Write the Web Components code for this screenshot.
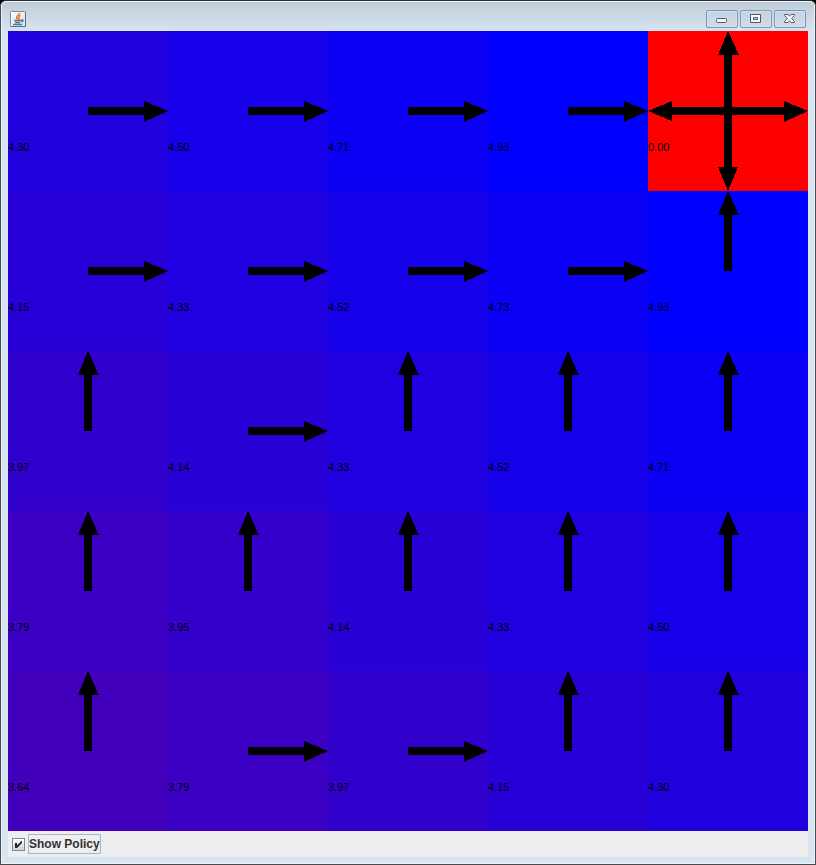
<!DOCTYPE html>
<html lang="en">
<head>
<meta charset="utf-8">
<title>Policy viewer</title>
<style>
html, body { margin: 0; min-height: 100%; background: #000; }
body { font-family: "Liberation Sans", Arial, sans-serif; }
</style>
</head>
<body>
<app-window>
  <java-icon slot="icon"></java-icon>
  <window-button slot="controls" kind="minimize"></window-button>
  <window-button slot="controls" kind="maximize"></window-button>
  <window-button slot="controls" kind="close"></window-button>
  <policy-grid></policy-grid>
  <policy-toggle>Show Policy</policy-toggle>
</app-window>
<script>
class BaseElement extends HTMLElement {
  render(html) {
    const t = document.createElement('template');
    t.innerHTML = html;
    this.attachShadow({ mode: 'open' }).append(t.content.cloneNode(true));
  }
}

customElements.define('app-window', class extends BaseElement {
  connectedCallback() {
    this.render(`
<style>
:host { display: block; box-sizing: border-box; border: 1px solid #4c484c; border-top-color: #2c2a2c; border-radius: 6px 6px 0 0; overflow: hidden; background: #d7e4f2; }
.frame { border: 1px solid #eef4fa; border-radius: 5px 5px 0 0; padding: 0 6px 6px; background: linear-gradient(#bfcddb, #d7e4f2 30px); }
header { display: flex; justify-content: space-between; height: 29px; }
.icon { padding: 9px 0 0 2px; }
.controls { display: flex; gap: 2px; padding: 8px 2px 0 0; }
</style>
<div class="frame">
  <header>
    <div class="icon"><slot name="icon"></slot></div>
    <div class="controls"><slot name="controls"></slot></div>
  </header>
  <main><slot></slot></main>
</div>`);
  }
});

customElements.define('java-icon', class extends BaseElement {
  connectedCallback() {
    this.render(`
<style>:host, svg { display: block; width: 16px; height: 16px; }</style>
<svg viewBox="0 0 16 16" aria-hidden="true">
  <defs><linearGradient id="g" x2="1" y2="1"><stop stop-color="#fff"/><stop offset="1" stop-color="#d9dcdf"/></linearGradient></defs>
  <rect x=".5" y=".5" width="15" height="15" rx="1" fill="url(#g)" stroke="#7890a4"/>
  <path d="M.5 15.5h15V1" fill="none" stroke="#527089"/>
  <path d="M9.500 2C10 4 6 4.500 6.500 6.500c.2 1 1 1.200 1.200 2M10.500 4.500C9 5 8 6 9 7c.4.600 0 1.200-.5 1.500" fill="none" stroke="#ea7a1c" stroke-width="1.500"/>
  <path d="M4 9.500h7.500M5 11.500h5M3 13.500h9M11.500 8.800c2.500-.3 2 2-.3 2.200" fill="none" stroke="#4f7b98" stroke-width="1.300"/>
</svg>`);
  }
});

const GLYPHS = {
  minimize: '<rect x="10.500" y="8.500" width="10" height="4" rx="1"/>',
  maximize: '<path fill-rule="evenodd" d="M10.500 4.500h10v8h-10zM13.500 7.500v2h4v-2z"/>',
  close: '<path d="M10.500 4.500h3.500l1.500 1.700L17 4.500h3.500v1L17.700 8.500l2.800 3v1H17l-1.500-1.700L14 12.500h-3.500v-1l2.800-3-2.800-3z"/>'
};
customElements.define('window-button', class extends BaseElement {
  connectedCallback() {
    const kind = this.getAttribute('kind');
    this.render(`
<style>
:host { display: block; }
button { display: block; box-sizing: border-box; width: 32px; height: 18px; margin: 0; padding: 0; border: 1px solid #8496b0; border-radius: 2px; background: linear-gradient(#c5d2df, #cfdce9); box-shadow: inset 0 0 0 1px #d3dfeb; }
svg { display: block; width: 30px; height: 16px; }
</style>
<button type="button" aria-label="${kind}"><svg viewBox="0 0 30 16" aria-hidden="true"><g fill="#f8f8f8" stroke="#535666" transform="translate(-1 -1)">${GLYPHS[kind]}</g></svg></button>`);
  }
});

const ARROWS = {
  r: 'M80 76H136V70L160 80L136 91V84H80Z',
  l: 'M80 76H24V70L0 80L24 90V84H80Z',
  u: 'M76 80V24H70L80 0L91 24H84V80Z',
  d: 'M76 80V136H70L80 160L90 136H84V80Z'
};
const MAX_VALUE = 4.93;
customElements.define('policy-cell', class extends BaseElement {
  connectedCallback() {
    const value = this.getAttribute('value');
    const blue = Math.round(Number(value) / MAX_VALUE * 255);
    const shapes = [...this.getAttribute('moves')].map(m => `<path d="${ARROWS[m]}"/>`).join('');
    this.render(`
<style>
:host { display: grid; background: rgb(${255 - blue}, 0, ${blue}); color: #000; }
svg, span { grid-area: 1 / 1; }
svg { display: block; width: 100%; }
span { align-self: end; padding-bottom: 37px; font-size: 11px; line-height: 14px; }
</style>
<svg viewBox="0 0 160 160" shape-rendering="crispEdges" aria-hidden="true">${shapes}</svg>
<span>${value}</span>`);
  }
});

const ROWS = [
  '4.30r 4.50r 4.71r 4.93r 0.00udlr',
  '4.15r 4.33r 4.52r 4.73r 4.93u',
  '3.97u 4.14r 4.33u 4.52u 4.71u',
  '3.79u 3.95u 4.14u 4.33u 4.50u',
  '3.64u 3.79r 3.97r 4.15u 4.30u'
];
customElements.define('policy-grid', class extends BaseElement {
  connectedCallback() {
    const cells = ROWS.join(' ').split(' ').map(c => `<policy-cell value="${c.slice(0, 4)}" moves="${c.slice(4)}"></policy-cell>`).join('');
    this.render(`<style>:host { display: grid; grid-template-columns: repeat(5, 1fr); }</style>${cells}`);
  }
});

customElements.define('policy-toggle', class extends BaseElement {
  connectedCallback() {
    this.render(`
<style>
:host { display: flex; align-items: center; box-sizing: border-box; height: 26px; padding-left: 4px; background: #eee; color: #333; }
label { display: flex; align-items: center; gap: 3px; font-size: 12px; font-weight: bold; line-height: 18px; }
input { appearance: none; box-sizing: border-box; width: 13px; height: 13px; margin: 0; border: 1px solid #7a8a99; background: linear-gradient(#fff, #c4d6e8); }
input:checked { background: url("data:image/svg+xml,%3Csvg xmlns='http://www.w3.org/2000/svg' viewBox='0 0 11 11'%3E%3Cpath d='M2 4h2v2.500L8.500 2H9v2L4 9H2z' fill='%23222'/%3E%3C/svg%3E"), linear-gradient(#fff, #c4d6e8); }
span { border: 1px solid #a3b8cc; }
</style>
<label><input type="checkbox" checked><span><slot></slot></span></label>`);
  }
});
</script>
</body>
</html>
